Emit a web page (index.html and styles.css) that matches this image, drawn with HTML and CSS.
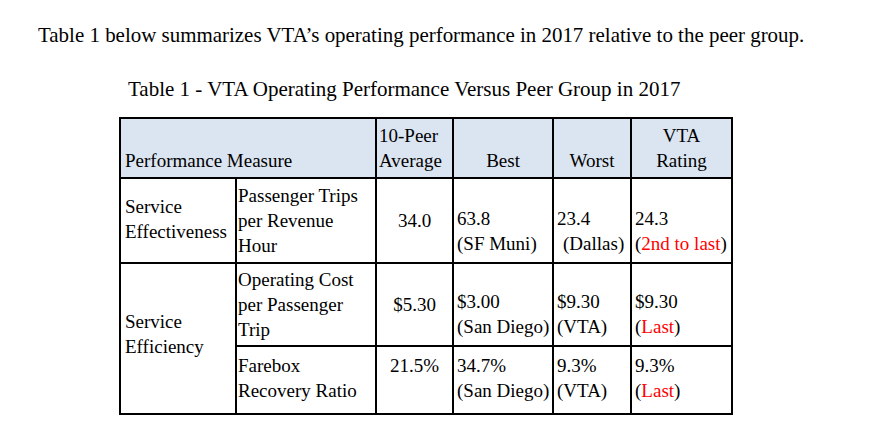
FILE: index.html
```html
<!DOCTYPE html>
<html lang="en">
<head>
<meta charset="utf-8">
<title>VTA Operating Performance</title>
<link rel="stylesheet" href="styles.css">
</head>
<body>
<div class="page">
  <p class="intro">Table 1 below summarizes VTA’s operating performance in 2017 relative to the peer group.</p>
  <p class="caption">Table 1 - VTA Operating Performance Versus Peer Group in 2017</p>
  <table class="perf">
    <colgroup>
      <col class="c1"><col class="c2"><col class="c3"><col class="c4"><col class="c5"><col class="c6">
    </colgroup>
    <tr class="head">
      <th colspan="2" class="measure">Performance Measure</th>
      <th class="avg">10-Peer<br>Average</th>
      <th class="ctr">Best</th>
      <th class="ctr">Worst</th>
      <th class="ctr">VTA<br>Rating</th>
    </tr>
    <tr class="r2">
      <td class="cat eff1">Service<br>Effectiveness</td>
      <td class="metric">Passenger Trips<br>per Revenue<br>Hour</td>
      <td class="num">34.0</td>
      <td class="val bottom">63.8<br>(SF Muni)</td>
      <td class="val bottom">23.4<br><span class="indent">(Dallas)</span></td>
      <td class="val bottom">24.3<br>(<span class="red">2nd to last</span>)</td>
    </tr>
    <tr class="r3">
      <td class="cat eff" rowspan="2">Service<br>Efficiency</td>
      <td class="metric">Operating Cost<br>per Passenger<br>Trip</td>
      <td class="num">$5.30</td>
      <td class="val bottom">$3.00<br>(San Diego)</td>
      <td class="val bottom">$9.30<br>(VTA)</td>
      <td class="val bottom">$9.30<br>(<span class="red">Last</span>)</td>
    </tr>
    <tr class="r4">
      <td class="metric">Farebox<br>Recovery Ratio</td>
      <td class="num">21.5%</td>
      <td class="val">34.7%<br>(San Diego)</td>
      <td class="val">9.3%<br>(VTA)</td>
      <td class="val">9.3%<br>(<span class="red">Last</span>)</td>
    </tr>
  </table>
</div>
</body>
</html>
```

FILE: styles.css
```css
body {
  margin: 0;
  background: #fff;
  color: #000;
  font-family: "Liberation Serif", "Times New Roman", serif;
}

.page {
  padding-top: 23px;
}

.intro {
  margin: 0 0 0 38px;
  font-size: 20.95px;
  line-height: 24px;
}

.caption {
  margin: 30px 0 0 128px;
  font-size: 21px;
  line-height: 24px;
}

.perf {
  margin: 16px 0 0 119px;
  border-collapse: collapse;
  table-layout: fixed;
  width: 614px;
  font-size: 19px;
  line-height: 25px;
  border: 2px solid #000;
}

.c1 { width: 116px; }
.c2 { width: 140px; }
.c3 { width: 77px; }
.c4 { width: 100px; }
.c5 { width: 78px; }
.c6 { width: 101px; }

.perf th,
.perf td {
  box-sizing: border-box;
  border: 2px solid #000;
  padding: 0 2px;
  font-weight: normal;
  text-align: left;
  vertical-align: middle;
  white-space: nowrap;
}

.perf .head th {
  background: #dbe5f1;
  vertical-align: bottom;
  padding-bottom: 4px;
  height: 60px;
}

.perf .head .measure { padding-left: 4px; }
.perf .head .avg { padding-left: 2px; }
.perf .head .ctr { text-align: center; }

.perf .r2 td { height: 85px; }
.perf .r3 td { height: 83px; }
.perf .r4 td { height: 68px; }

.perf .cat { padding-left: 4px; }
.perf .cat.eff1 { padding-bottom: 3px; }
.perf .cat.eff { padding-bottom: 9px; }
.perf .metric { padding-left: 1px; }
.perf .num { text-align: center; }
.perf .val { padding-left: 3px; }
.perf .val.bottom { vertical-align: bottom; padding-bottom: 6px; }

.perf .r4 td { vertical-align: top; padding-top: 6px; }

.indent { padding-left: 6px; }
.red { color: #ff0000; }
```
